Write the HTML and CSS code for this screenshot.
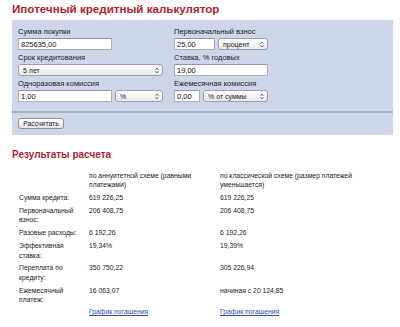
FILE: index.html
```html
<!DOCTYPE html>
<html lang="ru">
<head>
<meta charset="utf-8">
<title>Ипотечный кредитный калькулятор</title>
<link rel="stylesheet" href="styles.css">
</head>
<body>
<h1 class="title">Ипотечный кредитный калькулятор</h1>
<form class="panel">
  <div class="fields">
    <div class="field">
      <label class="label">Сумма покупки</label>
      <div class="controls"><input class="input w94" value="825635,00"></div>
    </div>
    <div class="field">
      <label class="label">Первоначальный взнос</label>
      <div class="controls">
        <input class="input w41" value="25,00">
        <span class="select w50"><span class="sel-text">процент</span><svg class="arrows" viewBox="0 0 4 7" width="4" height="7"><path d="M0.5 2.8 L2 1 L3.5 2.8 M0.5 4.2 L2 6 L3.5 4.2" fill="none" stroke="#555" stroke-width="0.8"/></svg></span>
      </div>
    </div>
    <div class="field">
      <label class="label">Срок кредитования</label>
      <div class="controls">
        <span class="select w145"><span class="sel-text">5 лет</span><svg class="arrows" viewBox="0 0 4 7" width="4" height="7"><path d="M0.5 2.8 L2 1 L3.5 2.8 M0.5 4.2 L2 6 L3.5 4.2" fill="none" stroke="#555" stroke-width="0.8"/></svg></span>
      </div>
    </div>
    <div class="field">
      <label class="label">Ставка, % годовых</label>
      <div class="controls"><input class="input w94" value="19,00"></div>
    </div>
    <div class="field">
      <label class="label">Одноразовая комиссия</label>
      <div class="controls">
        <input class="input w94" value="1,00">
        <span class="select w48"><span class="sel-text">%</span><svg class="arrows" viewBox="0 0 4 7" width="4" height="7"><path d="M0.5 2.8 L2 1 L3.5 2.8 M0.5 4.2 L2 6 L3.5 4.2" fill="none" stroke="#555" stroke-width="0.8"/></svg></span>
      </div>
    </div>
    <div class="field">
      <label class="label">Ежемесячная комиссия</label>
      <div class="controls">
        <input class="input w26" value="0,00">
        <span class="select w65"><span class="sel-text">% от суммы</span><svg class="arrows" viewBox="0 0 4 7" width="4" height="7"><path d="M0.5 2.8 L2 1 L3.5 2.8 M0.5 4.2 L2 6 L3.5 4.2" fill="none" stroke="#555" stroke-width="0.8"/></svg></span>
      </div>
    </div>
  </div>
  <div class="actions"><button type="button" class="btn">Рассчитать</button></div>
</form>

<h2 class="subtitle">Результаты расчета</h2>
<table class="results">
  <colgroup><col class="c1"><col class="c2"><col class="c3"></colgroup>
  <tr><td></td><td>по аннуитетной схеме (равными платежами)</td><td>по классической схеме (размер платежей уменьшается)</td></tr>
  <tr><td>Сумма кредита:</td><td>619 226,25</td><td>619 226,25</td></tr>
  <tr><td>Первоначальный взнос:</td><td>206 408,75</td><td>206 408,75</td></tr>
  <tr><td>Разовые расходы:</td><td>6 192,26</td><td>6 192,26</td></tr>
  <tr><td>Эффективная ставка:</td><td>19,34%</td><td>19,39%</td></tr>
  <tr><td>Переплата по кредиту:</td><td>350 750,22</td><td>305 226,94</td></tr>
  <tr><td>Ежемесячный платеж:</td><td>16 063,07</td><td>начиная с 20 124,85</td></tr>
  <tr class="link-row"><td></td><td><a class="link" href="#">График погашения</a></td><td><a class="link" href="#">График погашения</a></td></tr>
</table>
</body>
</html>
```

FILE: styles.css
```css
* { box-sizing: border-box; }
html, body { margin: 0; padding: 0; background: #fff; }
body {
  padding: 0 12px;
  font-family: "Liberation Sans", Arial, sans-serif;
  color: #222;
}
.title {
  margin: 1px 0 3px;
  font-size: 11.6px;
  line-height: 16px;
  font-weight: bold;
  color: #b31e2d;
}
.panel {
  width: 381px;
  margin: 0;
  background: #cdd7e9;
}
.fields {
  display: grid;
  grid-template-columns: 145px 94px;
  column-gap: 11px;
  row-gap: 2px;
  padding: 6px 6px 9px;
  border-bottom: 2px solid #a8b3c7;
}
.field { display: flex; flex-direction: column; }
.label {
  font-size: 7.5px;
  line-height: 11px;
  margin-bottom: 1px;
  color: #222;
}
.controls { display: flex; gap: 3px; height: 12px; }
.input {
  height: 12px;
  margin: 0;
  padding: 0 2px;
  border: 1px solid #a9b0bd;
  border-top-color: #8f97a5;
  background: #fff;
  font-family: "Liberation Sans", Arial, sans-serif;
  font-size: 7.5px;
  color: #111;
  outline: none;
}
.w94 { width: 94px; }
.w41 { width: 41px; }
.w26 { width: 26px; }
.w50 { width: 50px; }
.w48 { width: 48px; }
.w65 { width: 65px; }
.w145 { width: 145px; }
.select {
  display: flex;
  align-items: center;
  justify-content: space-between;
  height: 12px;
  padding: 0 3px 0 4px;
  border: 1px solid #9aa1ad;
  border-radius: 3px;
  background: linear-gradient(#ffffff, #e6e8ec);
  font-size: 7px;
  color: #222;
}
.sel-text { white-space: nowrap; }
.arrows { display: block; flex: none; }
.actions { padding: 5px 6px 6px; }
.btn {
  display: block;
  width: 46px;
  height: 11px;
  margin: 0;
  padding: 0;
  border: 1px solid #8e939c;
  border-radius: 3px;
  background: linear-gradient(#ffffff, #e3e5e9);
  font-family: "Liberation Sans", Arial, sans-serif;
  font-size: 6.8px;
  line-height: 9px;
  color: #222;
}
.subtitle {
  margin: 14px 0 8px;
  font-size: 10px;
  line-height: 12px;
  font-weight: bold;
  color: #b31e2d;
}
.results {
  margin-left: 7px;
  border-collapse: collapse;
  table-layout: fixed;
  width: 360px;
  font-size: 6.8px;
  line-height: 9.6px;
  color: #222;
}
.c1 { width: 70px; }
.c2 { width: 131px; }
.c3 { width: 159px; }
.results td {
  vertical-align: top;
  padding: 1.6px 8px 1.6px 0;
}
.link-row td { padding-top: 0.8px; }
.link { color: #2d4f9c; text-decoration: underline; }
```
